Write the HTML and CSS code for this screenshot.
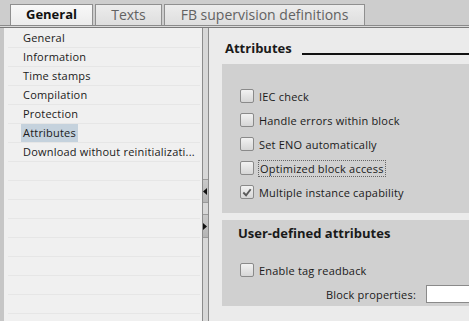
FILE: index.html
```html
<!DOCTYPE html>
<html lang="en">
<head>
    <meta charset="UTF-8">
    <title>Block properties</title>
    <link rel="stylesheet" href="styles.css">
</head>
<body>
    <div class="tabbar">
        <div class="tab active">General</div>
        <div class="tab tab-texts">Texts</div>
        <div class="tab tab-fb">FB supervision definitions</div>
    </div>
    <div class="tabline"></div>

    <div class="main">
        <div class="strip"></div>

        <div class="nav">
            <div class="nav-list">
                <div class="nav-item"><span>General</span></div>
                <div class="nav-item"><span>Information</span></div>
                <div class="nav-item"><span>Time stamps</span></div>
                <div class="nav-item"><span>Compilation</span></div>
                <div class="nav-item"><span>Protection</span></div>
                <div class="nav-item selected"><span>Attributes</span></div>
                <div class="nav-item"><span>Download without reinitializati...</span></div>
            </div>
        </div>

        <div class="splitter">
            <div class="split-btn">
                <svg width="4" height="7" viewBox="0 0 4 7"><polygon points="4,0 0,3.5 4,7" fill="#111"/></svg>
            </div>
            <div class="split-btn">
                <svg width="4" height="7" viewBox="0 0 4 7"><polygon points="0,0 4,3.5 0,7" fill="#111"/></svg>
            </div>
        </div>

        <div class="content">
            <div class="section-head">
                <span class="section-title">Attributes</span>
                <span class="rule"></span>
            </div>

            <div class="group group-attrs">
                <label class="check-row"><span class="box"></span>IEC check</label>
                <label class="check-row"><span class="box"></span>Handle errors within block</label>
                <label class="check-row"><span class="box"></span>Set ENO automatically</label>
                <label class="check-row"><span class="box"></span><span class="focus">Optimized block access</span></label>
                <label class="check-row">
                    <span class="box">
                        <svg width="13" height="13" viewBox="0 0 13 13"><polyline points="2.5,6.5 5.5,9.5 10.5,3" fill="none" stroke="#5a5a5a" stroke-width="2"/></svg>
                    </span>Multiple instance capability
                </label>
            </div>

            <div class="group group-user">
                <div class="group-title">User-defined attributes</div>
                <label class="check-row"><span class="box"></span>Enable tag readback</label>
                <div class="prop-row">
                    <span class="prop-label">Block properties:</span>
                    <span class="prop-input"></span>
                </div>
            </div>
        </div>
    </div>
</body>
</html>
```

FILE: styles.css
```css
body {
    margin: 0;
    width: 469px;
    height: 321px;
    overflow: hidden;
    font-family: 'Open Sans', sans-serif;
    font-size: 11px;
    color: #1a1a1a;
    background-color: #ebebeb;
}

.tabbar {
    display: flex;
    align-items: flex-end;
    gap: 2px;
    height: 25px;
    padding-left: 10px;
    background-color: #cdcdcd;
}

.tab {
    box-sizing: border-box;
    flex-shrink: 0;
    height: 21px;
    border: 1px solid #8f8f8f;
    border-bottom: none;
    background: linear-gradient(#ececec, #dedede);
    color: #626262;
    font-size: 14px;
    line-height: 19px;
    text-align: center;
}

.tab.active {
    width: 83px;
    background: linear-gradient(#f8f8f8, #ececec);
    color: #111111;
    font-size: 13px;
    font-weight: 700;
}

.tab-texts {
    width: 67px;
}

.tab-fb {
    width: 201px;
}

.tabline {
    height: 1px;
    border-top: 1px solid #8a8a8a;
    border-bottom: 1px solid #7a7a7a;
    background-color: #dadada;
}

.main {
    display: flex;
    height: 293px;
}

.strip {
    width: 4px;
    background-color: #c6c6c6;
}

.nav {
    width: 198px;
    background-color: #f0f0f0;
}

.nav-list {
    height: 100%;
    margin: 0 2px 0 4px;
    padding-top: 1px;
    box-sizing: border-box;
    background: repeating-linear-gradient(to bottom, transparent 0, transparent 18px, #e6e6e6 18px, #e6e6e6 19px);
    background-position: 0 1px;
}

.nav-item {
    height: 19px;
    padding-left: 13px;
}

.nav-item span {
    display: inline-block;
    height: 18px;
    padding: 0 2px;
    line-height: 18px;
    letter-spacing: 0.2px;
}

.nav-item.selected span {
    background-color: #c5d2dd;
}

.splitter {
    box-sizing: border-box;
    width: 7px;
    border-left: 1px solid #8c8c8c;
    border-right: 1px solid #8c8c8c;
    background-color: #d8d8d8;
    display: flex;
    flex-direction: column;
    gap: 11px;
    padding-top: 151px;
}

.split-btn {
    height: 22px;
    border-top: 1px solid #9a9a9a;
    border-bottom: 1px solid #9a9a9a;
    background: linear-gradient(#c9c9c9, #b5b5b5);
    display: flex;
    align-items: center;
}

.content {
    flex: 1;
    padding-left: 13px;
    overflow: hidden;
}

.section-head {
    display: flex;
    height: 36px;
    padding-left: 3px;
}

.section-title {
    margin-top: 11px;
    font-size: 13px;
    font-weight: 700;
    line-height: 18px;
}

.rule {
    flex: 1;
    height: 0;
    margin: 25px 0 0 10px;
    border-top: 2px solid #111111;
}

.group {
    background-color: #d0d0d0;
    padding-left: 18px;
}

.group-attrs {
    height: 149px;
    box-sizing: border-box;
    padding-top: 20px;
}

.check-row {
    display: flex;
    align-items: center;
    height: 24px;
    letter-spacing: 0.2px;
}

.box {
    box-sizing: border-box;
    flex-shrink: 0;
    width: 14px;
    height: 14px;
    margin-right: 5px;
    border: 1px solid #8a8a8a;
    border-radius: 2px;
    background: linear-gradient(#f2f2f2, #d6d6d6);
    display: flex;
    align-items: center;
    justify-content: center;
}

.focus {
    padding: 0 1px;
    line-height: 15px;
    outline: 1px dotted #666666;
}

.group-user {
    height: 86px;
    box-sizing: border-box;
    margin-top: 7px;
    padding-top: 4px;
}

.group-title {
    height: 18px;
    margin: 0 0 16px -2px;
    font-size: 13px;
    font-weight: 700;
    line-height: 18px;
}

.prop-row {
    display: flex;
    align-items: center;
    gap: 10px;
    margin-top: 3px;
    margin-left: -18px;
}

.prop-label {
    flex-shrink: 0;
    width: 194px;
    text-align: right;
    letter-spacing: 0.2px;
}

.prop-input {
    box-sizing: border-box;
    flex-shrink: 0;
    width: 60px;
    height: 18px;
    border: 1px solid #8a8a8a;
    background-color: #ffffff;
}
```
